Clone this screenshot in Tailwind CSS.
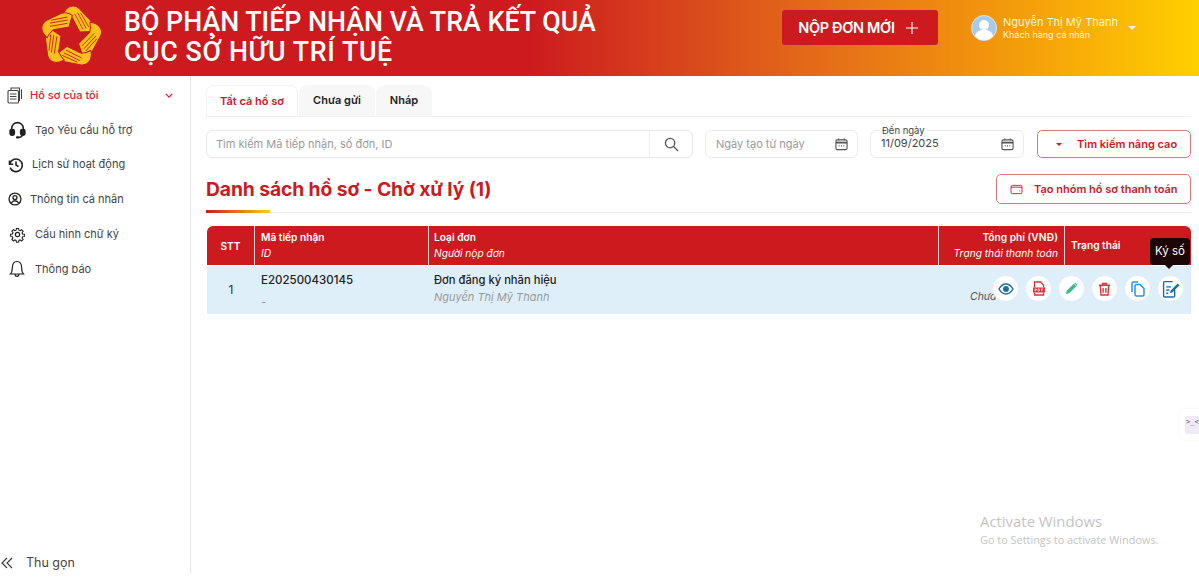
<!DOCTYPE html>
<html lang="vi">
<head>
    <meta charset="UTF-8">
    <meta name="viewport" content="width=device-width, initial-scale=1.0">
    <title>Bộ phận tiếp nhận và trả kết quả</title>
    <script src="https://cdn.jsdelivr.net/npm/@tailwindcss/browser@4"></script>
</head>
<body class="bg-white h-[585px] w-[1199px] overflow-hidden relative font-['Inter','Noto_Sans',sans-serif] text-[#333]">
    <!-- header -->
    <header class="h-[76px] flex items-center bg-[linear-gradient(90deg,#cc1a1f_0%,#cc1a1f_44%,#e2651a_66%,#f5a00a_86%,#ffd000_100%)]">
        <div class="w-[124px] pl-[38px] shrink-0 -mt-[2px]">
            <svg viewBox="25 18 190 190" class="w-[66px] h-[64px]">
                <defs>
                    <g id="hand">
                        <path d="M96 46C106 22 128 14 144 28L178 64Q188 80 182 97L146 98L124 56Q112 48 96 46Z" fill="#fcc21b" stroke="#cc1a1f" stroke-width="3"/>
                        <path d="M131 44L155 90M140 41L165 88M149 42L173 84" stroke="#cc1a1f" stroke-width="2.500" fill="none"/>
                    </g>
                </defs>
                <use href="#hand"/>
                <use href="#hand" transform="rotate(72 120 113)"/>
                <use href="#hand" transform="rotate(144 120 113)"/>
                <use href="#hand" transform="rotate(216 120 113)"/>
                <use href="#hand" transform="rotate(288 120 113)"/>
            </svg>
        </div>
        <h1 class="w-[658px] shrink-0 -mt-[2px] font-['Roboto',sans-serif] font-medium text-[26.8px] leading-[30px] text-white">BỘ PHẬN TIẾP NHẬN VÀ TRẢ KẾT QUẢ<br><span class="tracking-[0.6px]">CỤC SỞ HỮU TRÍ TUỆ</span></h1>
        <button class="w-[156px] h-[35px] -mt-[21px] shrink-0 rounded-[3px] bg-[#cc1a1f] text-white font-semibold text-[14.5px] tracking-[-0.35px] flex items-center justify-center gap-[11px] pr-[4px]">
            NỘP ĐƠN MỚI
            <svg viewBox="0 0 12 12" class="w-3 h-3" stroke="white" stroke-width="1.2"><path d="M6 0v12M0 6h12"/></svg>
        </button>
        <div class="ml-[33px] -mt-[20px] flex items-center text-[#fff6d8]">
            <svg viewBox="0 0 26 26" class="w-[26px] h-[26px]">
                <circle cx="13" cy="13" r="12.5" fill="#a9c9e8" stroke="#d7e6f2"/>
                <circle cx="13" cy="10" r="5" fill="white"/>
                <path d="M4 21c1-5 5-6 9-6s8 1 9 6c-2 3-5 4-9 4s-7-1-9-4z" fill="white"/>
            </svg>
            <div class="ml-[6px] w-[125px]">
                <div class="text-[11px] leading-[13px]">Nguyễn Thị Mỹ Thanh</div>
                <div class="text-[9px] leading-[11px]">Khách hàng cá nhân</div>
            </div>
            <span class="w-0 h-0 border-x-[4px] border-x-transparent border-t-[4px] border-t-[#fff6d8]"></span>
        </div>
    </header>

    <div class="flex h-[498px]">
        <!-- sidebar -->
        <aside class="w-[191px] shrink-0 border-r border-[#e8e8e8] flex flex-col text-[11px] text-[#444]">
            <nav class="pt-[2px]">
                <a class="h-[34.7px] flex items-center pl-[7px] pr-[17px] text-[#e02030] font-medium">
                    <svg viewBox="0 0 16 17" class="w-[16px] h-[18px] mr-[7px]" fill="none" stroke="#444" stroke-width="1.1"><rect x="1" y="4" width="10.5" height="12.5" rx="1"/><path d="M4 4V1.5h5M9 1.5h3.500V14h-1M14.500 3v9.500M3 7.500h6.500M3 10h6.500M3 12.500h6.500"/></svg>
                    Hồ sơ của tôi
                    <svg viewBox="0 0 10 6" class="w-[8px] h-[5px] ml-auto" fill="none" stroke="#e02030" stroke-width="1.6"><path d="M1 1l4 4 4-4"/></svg>
                </a>
                <a class="h-[34.7px] flex items-center pl-[9px]">
                    <svg viewBox="0 0 16 17" class="w-[17px] h-[18px] mr-[9px]" fill="none" stroke="#222" stroke-width="1.5"><path d="M2.500 9V7a5.500 5.500 0 0 1 11 0v2M12.500 13c0 1.500-2 2.500-4 2.500"/><rect x="1" y="8" width="4" height="5.500" rx="1.600" fill="#222"/><rect x="11" y="8" width="4" height="5.500" rx="1.600" fill="#222"/><rect x="6.500" y="14.500" width="3" height="2" rx="1" fill="#222" stroke="none"/></svg>
                    Tạo Yêu cầu hỗ trợ
                </a>
                <a class="h-[34.7px] flex items-center pl-[8px]">
                    <svg viewBox="0 0 16 16" class="w-[16px] h-[16px] mr-[8px]" fill="none" stroke="#222" stroke-width="1.6"><path d="M1.500 3.500v3.700h3.700M1.800 7a6.300 6.300 0 1 1 .3 3.600M8 4.500V8l2.500 1.700"/></svg>
                    Lịch sử hoạt động
                </a>
                <a class="h-[34.7px] flex items-center pl-[8px]">
                    <svg viewBox="0 0 16 16" class="w-[14px] h-[14px] mr-[8px]" fill="none" stroke="#222" stroke-width="1.5"><circle cx="8" cy="8" r="6.800"/><circle cx="8" cy="6.400" r="2.300"/><path d="M3.800 12.600c1-2 2.600-2.600 4.200-2.600s3.200.6 4.200 2.600"/></svg>
                    Thông tin cá nhân
                </a>
                <a class="h-[34.7px] flex items-center pl-[9px]">
                    <svg viewBox="0 0 24 24" class="w-[17px] h-[17px] mr-[9px]" fill="none" stroke="#222" stroke-width="1.7"><circle cx="12" cy="12" r="3"/><path d="M10.300 2.500h3.400l.5 2.800 1.900.8 2.300-1.600 2.400 2.400-1.600 2.300.8 1.900 2.800.5v3.400l-2.800.5-.8 1.900 1.600 2.300-2.400 2.400-2.300-1.600-1.900.8-.5 2.800h-3.400l-.5-2.800-1.900-.8-2.300 1.600-2.400-2.400 1.600-2.300-.8-1.900-2.800-.5v-3.400l2.800-.5.8-1.900-1.600-2.300 2.400-2.400 2.300 1.600 1.900-.8z" transform="translate(1.200 1.200) scale(.9)"/></svg>
                    Cấu hình chữ ký
                </a>
                <a class="h-[34.7px] flex items-center pl-[9px]">
                    <svg viewBox="0 0 16 18" class="w-[16px] h-[18px] mr-[10px]" fill="none" stroke="#222" stroke-width="1.2"><path d="M1.500 14c1.500-1.300 1.700-3 1.800-6C3.400 4 5.400 1.500 8 1.500S12.600 4 12.700 8c.1 3 .3 4.700 1.800 6zM6 14c0 3.200 4 3.200 4 0"/></svg>
                    Thông báo
                </a>
            </nav>
            <div class="mt-auto h-[24px] -mb-[1px] flex items-center pl-[1px] text-[12.5px]">
                <svg viewBox="0 0 12 12" class="w-[12px] h-[12px] mr-[13px]" fill="none" stroke="#333" stroke-width="1.1"><path d="M6 1L1 6l5 5M11 1L6 6l5 5"/></svg>
                Thu gọn
            </div>
        </aside>

        <!-- main -->
        <main class="flex-1 pl-[15px] pr-[8px]">
            <div class="flex items-end gap-[1px] h-[41px] border-b border-[#f0f0f0] text-[11px] font-semibold">
                <button class="w-[92px] h-[31px] rounded-t-[8px] bg-white border border-b-0 border-[#f3f3f3] text-[#cc1a1f]">Tất cả hồ sơ</button>
                <button class="w-[76px] h-[31px] rounded-t-[8px] bg-[#f7f7f7] text-[#222]">Chưa gửi</button>
                <button class="w-[56px] h-[31px] rounded-t-[8px] bg-[#f7f7f7] text-[#222]">Nháp</button>
            </div>

            <div class="flex mt-[13px] h-[28px] text-[11px]">
                <div class="w-[487px] flex rounded-[6px] border border-[#e6e6e6]">
                    <span class="flex-1 pl-[9px] flex items-center text-[#9a9a9a]">Tìm kiếm Mã tiếp nhận, số đơn, ID</span>
                    <span class="w-[43px] border-l border-[#eeeeee] flex items-center justify-center">
                        <svg viewBox="0 0 16 16" class="w-[15px] h-[15px]" fill="none" stroke="#555" stroke-width="1.4"><circle cx="6.500" cy="6.500" r="5"/><path d="M10.200 10.200L15 15"/></svg>
                    </span>
                </div>
                <div class="w-[153px] ml-[12px] flex items-center justify-between rounded-[6px] border border-[#ececec] pl-[10px] pr-[9px] text-[#9a9a9a]">
                    Ngày tạo từ ngày
                    <svg viewBox="0 0 14 14" class="w-[13px] h-[14px]" fill="none" stroke="#555" stroke-width="1.2"><rect x="1" y="2.500" width="12" height="10.500" rx="1.500"/><path d="M1 5.500h12" stroke-width="2"/><path d="M4 1v2M10 1v2M4 9h1M6.500 9h1M9 9h1"/></svg>
                </div>
                <div class="relative w-[154px] ml-[12px] flex items-center justify-between rounded-[6px] border border-[#ececec] pl-[10px] pr-[9px] text-[#444]">
                    <span class="absolute -top-[6px] left-[9px] px-[2px] bg-white text-[9.5px] leading-[11px]">Đến ngày</span>
                    <span class="-mt-[1px]">11/09/2025</span>
                    <svg viewBox="0 0 14 14" class="w-[13px] h-[14px]" fill="none" stroke="#555" stroke-width="1.2"><rect x="1" y="2.500" width="12" height="10.500" rx="1.500"/><path d="M1 5.500h12" stroke-width="2"/><path d="M4 1v2M10 1v2M4 9h1M6.500 9h1M9 9h1"/></svg>
                </div>
                <button class="w-[154px] ml-[13px] flex items-center rounded-[5px] border border-[#d9777a] text-[#cc1a1f] font-semibold text-[11px] pl-[18px]">
                    <span class="w-0 h-0 border-x-[3.5px] border-x-transparent border-t-[3.5px] border-t-[#cc1a1f] mr-[15px]"></span>
                    Tìm kiếm nâng cao
                </button>
            </div>

            <div class="flex items-center justify-between mt-[16px] h-[30px]">
                <h2 class="text-[19.3px] font-bold text-[#cc1a1f] tracking-[-0.1px]">Danh sách hồ sơ - Chờ xử lý (1)</h2>
                <button class="w-[195px] h-[30px] flex items-center rounded-[5px] border border-[#d9777a] text-[#cc1a1f] font-semibold text-[11px] pl-[13px]">
                    <svg viewBox="0 0 14 12" class="w-[13px] h-[11px] mr-[11px]" fill="none" stroke="#cc1a1f" stroke-width="1"><rect x="1" y="1.500" width="12" height="9" rx="1.500"/><path d="M1 3.500h12M10 7.500h1"/></svg>
                    Tạo nhóm hồ sơ thanh toán
                </button>
            </div>
            <div class="relative mt-[8px] h-[1px] bg-[#ececec]">
                <div class="absolute left-0 -top-[2px] w-[64px] h-[3px] bg-[linear-gradient(90deg,#cc1a1f,#ffd000)]"></div>
            </div>

            <!-- table -->
            <div class="relative mt-[13px] ml-[1px] w-[984px]">
                <div class="grid grid-cols-[48px_174px_510px_126px_126px] h-[39px] rounded-t-[6px] bg-[#cc1a1f] text-white text-[10.2px] leading-[16px]">
                    <div class="flex items-center justify-center font-semibold border-r border-white/80">STT</div>
                    <div class="pl-[6px] pt-[3px] border-r border-white/80"><div class="font-semibold">Mã tiếp nhận</div><div class="italic">ID</div></div>
                    <div class="pl-[5px] pt-[3px] border-r border-white/80"><div class="font-semibold">Loại đơn</div><div class="italic">Người nộp đơn</div></div>
                    <div class="pr-[6px] pt-[3px] text-right border-r border-white/80"><div class="font-semibold">Tổng phí (VNĐ)</div><div class="italic">Trạng thái thanh toán</div></div>
                    <div class="pl-[6px] flex items-center font-semibold pb-[1px]">Trạng thái</div>
                </div>
                <div class="grid grid-cols-[48px_174px_510px_126px_126px] h-[48px] mt-[1px] bg-[#dfeffa] text-[#333]">
                    <div class="flex items-center justify-center text-[12px]">1</div>
                    <div class="pl-[6px] pt-[7px] text-[11.5px]"><div class="leading-[15px] font-medium text-[#222]">E202500430145</div><div class="text-[#999] leading-[20px] mt-[4px]">-</div></div>
                    <div class="pl-[5px] pt-[7px]"><div class="leading-[15px] font-medium text-[11.2px] text-[#222]">Đơn đăng ký nhãn hiệu</div><div class="italic text-[11px] text-[#999] leading-[17px] mt-[1px]">Nguyễn Thị Mỹ Thanh</div></div>
                    <div></div>
                    <div></div>
                </div>
                <span class="absolute left-[763px] top-[64px] italic text-[10.5px] leading-[14px] text-[#555]">Chưa</span>

                <!-- row actions -->
                <div class="absolute left-[785px] top-[49px] flex gap-[6px]">
                    <span class="w-[27px] h-[27px] rounded-full bg-white border border-[#e4edf3] flex items-center justify-center">
                        <svg viewBox="0 0 16 12" class="w-[16px] h-[12px]" fill="none" stroke="#1f6c9c" stroke-width="1.5"><path d="M1 6c2-3.500 4.500-5 7-5s5 1.500 7 5c-2 3.500-4.500 5-7 5s-5-1.500-7-5z"/><circle cx="8" cy="6" r="2.200" fill="#1f6c9c"/></svg>
                    </span>
                    <span class="w-[27px] h-[27px] rounded-full bg-white border border-[#e4edf3] flex items-center justify-center">
                        <svg viewBox="0 0 14 16" class="w-[14px] h-[17px]"><path d="M2.500 7V1.500h6l3 3V7" fill="none" stroke="#e0313a" stroke-width="1.3"/><rect x="1" y="7" width="12" height="5" fill="#e0313a"/><path d="M2.500 12v2.500h9V12" fill="none" stroke="#e0313a" stroke-width="1.3"/><path d="M3 8.200v2.600M3 8.500h1.400v1.200H3M6 8.300v2.400h1.200q.6-1.200 0-2.400zM9.500 10.800V8.400h1.700M9.500 9.500h1.400" fill="none" stroke="white" stroke-width=".6"/></svg>
                    </span>
                    <span class="w-[27px] h-[27px] rounded-full bg-white border border-[#e4edf3] flex items-center justify-center">
                        <svg viewBox="0 0 14 14" class="w-[13px] h-[13px]" fill="#3cb98a"><path d="M1 13l.8-3.500L9.500 1.800l2.700 2.700-7.700 7.700zM10.300 1l.7-.3 2.300 2.300-.3.700-.4.400-2.700-2.700z"/></svg>
                    </span>
                    <span class="w-[27px] h-[27px] rounded-full bg-white border border-[#e4edf3] flex items-center justify-center">
                        <svg viewBox="0 0 14 15" class="w-[13px] h-[14px]" fill="none" stroke="#e0313a" stroke-width="1.5"><path d="M1 3.500h12M5 3.500V1.500h4v2M2.500 3.500l.7 10.500h7.600l.7-10.500M5.500 6.500v5M8.500 6.500v5"/></svg>
                    </span>
                    <span class="w-[27px] h-[27px] rounded-full bg-white border border-[#e4edf3] flex items-center justify-center">
                        <svg viewBox="0 0 14 16" class="w-[14px] h-[16px]" fill="none" stroke="#2f8fe0" stroke-width="1.5"><path d="M1 11V2.500C1 1.700 1.700 1 2.500 1H7"/><path d="M4 5c0-.8.7-1.500 1.500-1.500H9L13 7.500v6c0 .8-.7 1.500-1.500 1.500h-6C4.700 15 4 14.300 4 13.500z"/></svg>
                    </span>
                    <span class="w-[27px] h-[27px] rounded-full bg-white border border-[#e4edf3] flex items-center justify-center">
                        <svg viewBox="0 0 17 17" class="w-[18px] h-[18px]" fill="none" stroke="#1f6c9c" stroke-width="1.3"><path d="M12 9.500V15a1 1 0 0 1-1 1H2.500a1 1 0 0 1-1-1V2.500a1 1 0 0 1 1-1H10"/><path d="M4 6.500h4.500M4 9.500h3M4 12.500h2"/><path d="M7.500 12.500l.6-2.300 6.700-6.900 1.700 1.700-6.800 6.900z" fill="#1f6c9c" stroke="none"/></svg>
                    </span>
                </div>

                <!-- tooltip -->
                <div class="absolute left-[943px] top-[12px] w-[40px] h-[27px] rounded-[4px] bg-[#1c0606] text-white text-[11.5px] flex items-center justify-center">
                    Ký số
                    <span class="absolute -bottom-[4px] left-[15px] w-0 h-0 border-x-[4px] border-x-transparent border-t-[4px] border-t-[#1c0606]"></span>
                </div>
            </div>
        </main>
    </div>

    <!-- floating widget on the right edge -->
    <div class="absolute left-[1180px] top-[409px] w-[30px] h-[31px] rounded-[5px] bg-white shadow-[0_0_3px_rgba(0,0,0,0.06)] flex items-center pl-[5px]">
        <div class="w-[20px] h-[18px] rounded-[3px] bg-[#f0e9f7] text-[7px] leading-[12px] text-[#555] font-['DejaVu_Sans_Mono',monospace] pl-[1px]">&gt;_&lt;</div>
    </div>

    <!-- windows watermark -->
    <div class="absolute left-[980px] top-[511px] font-['Open_Sans',sans-serif] text-[#c4c4c4]">
        <div class="text-[14.9px] leading-[20px]">Activate Windows</div>
        <div class="text-[10.9px] leading-[17px]">Go to Settings to activate Windows.</div>
    </div>
</body>
</html>
